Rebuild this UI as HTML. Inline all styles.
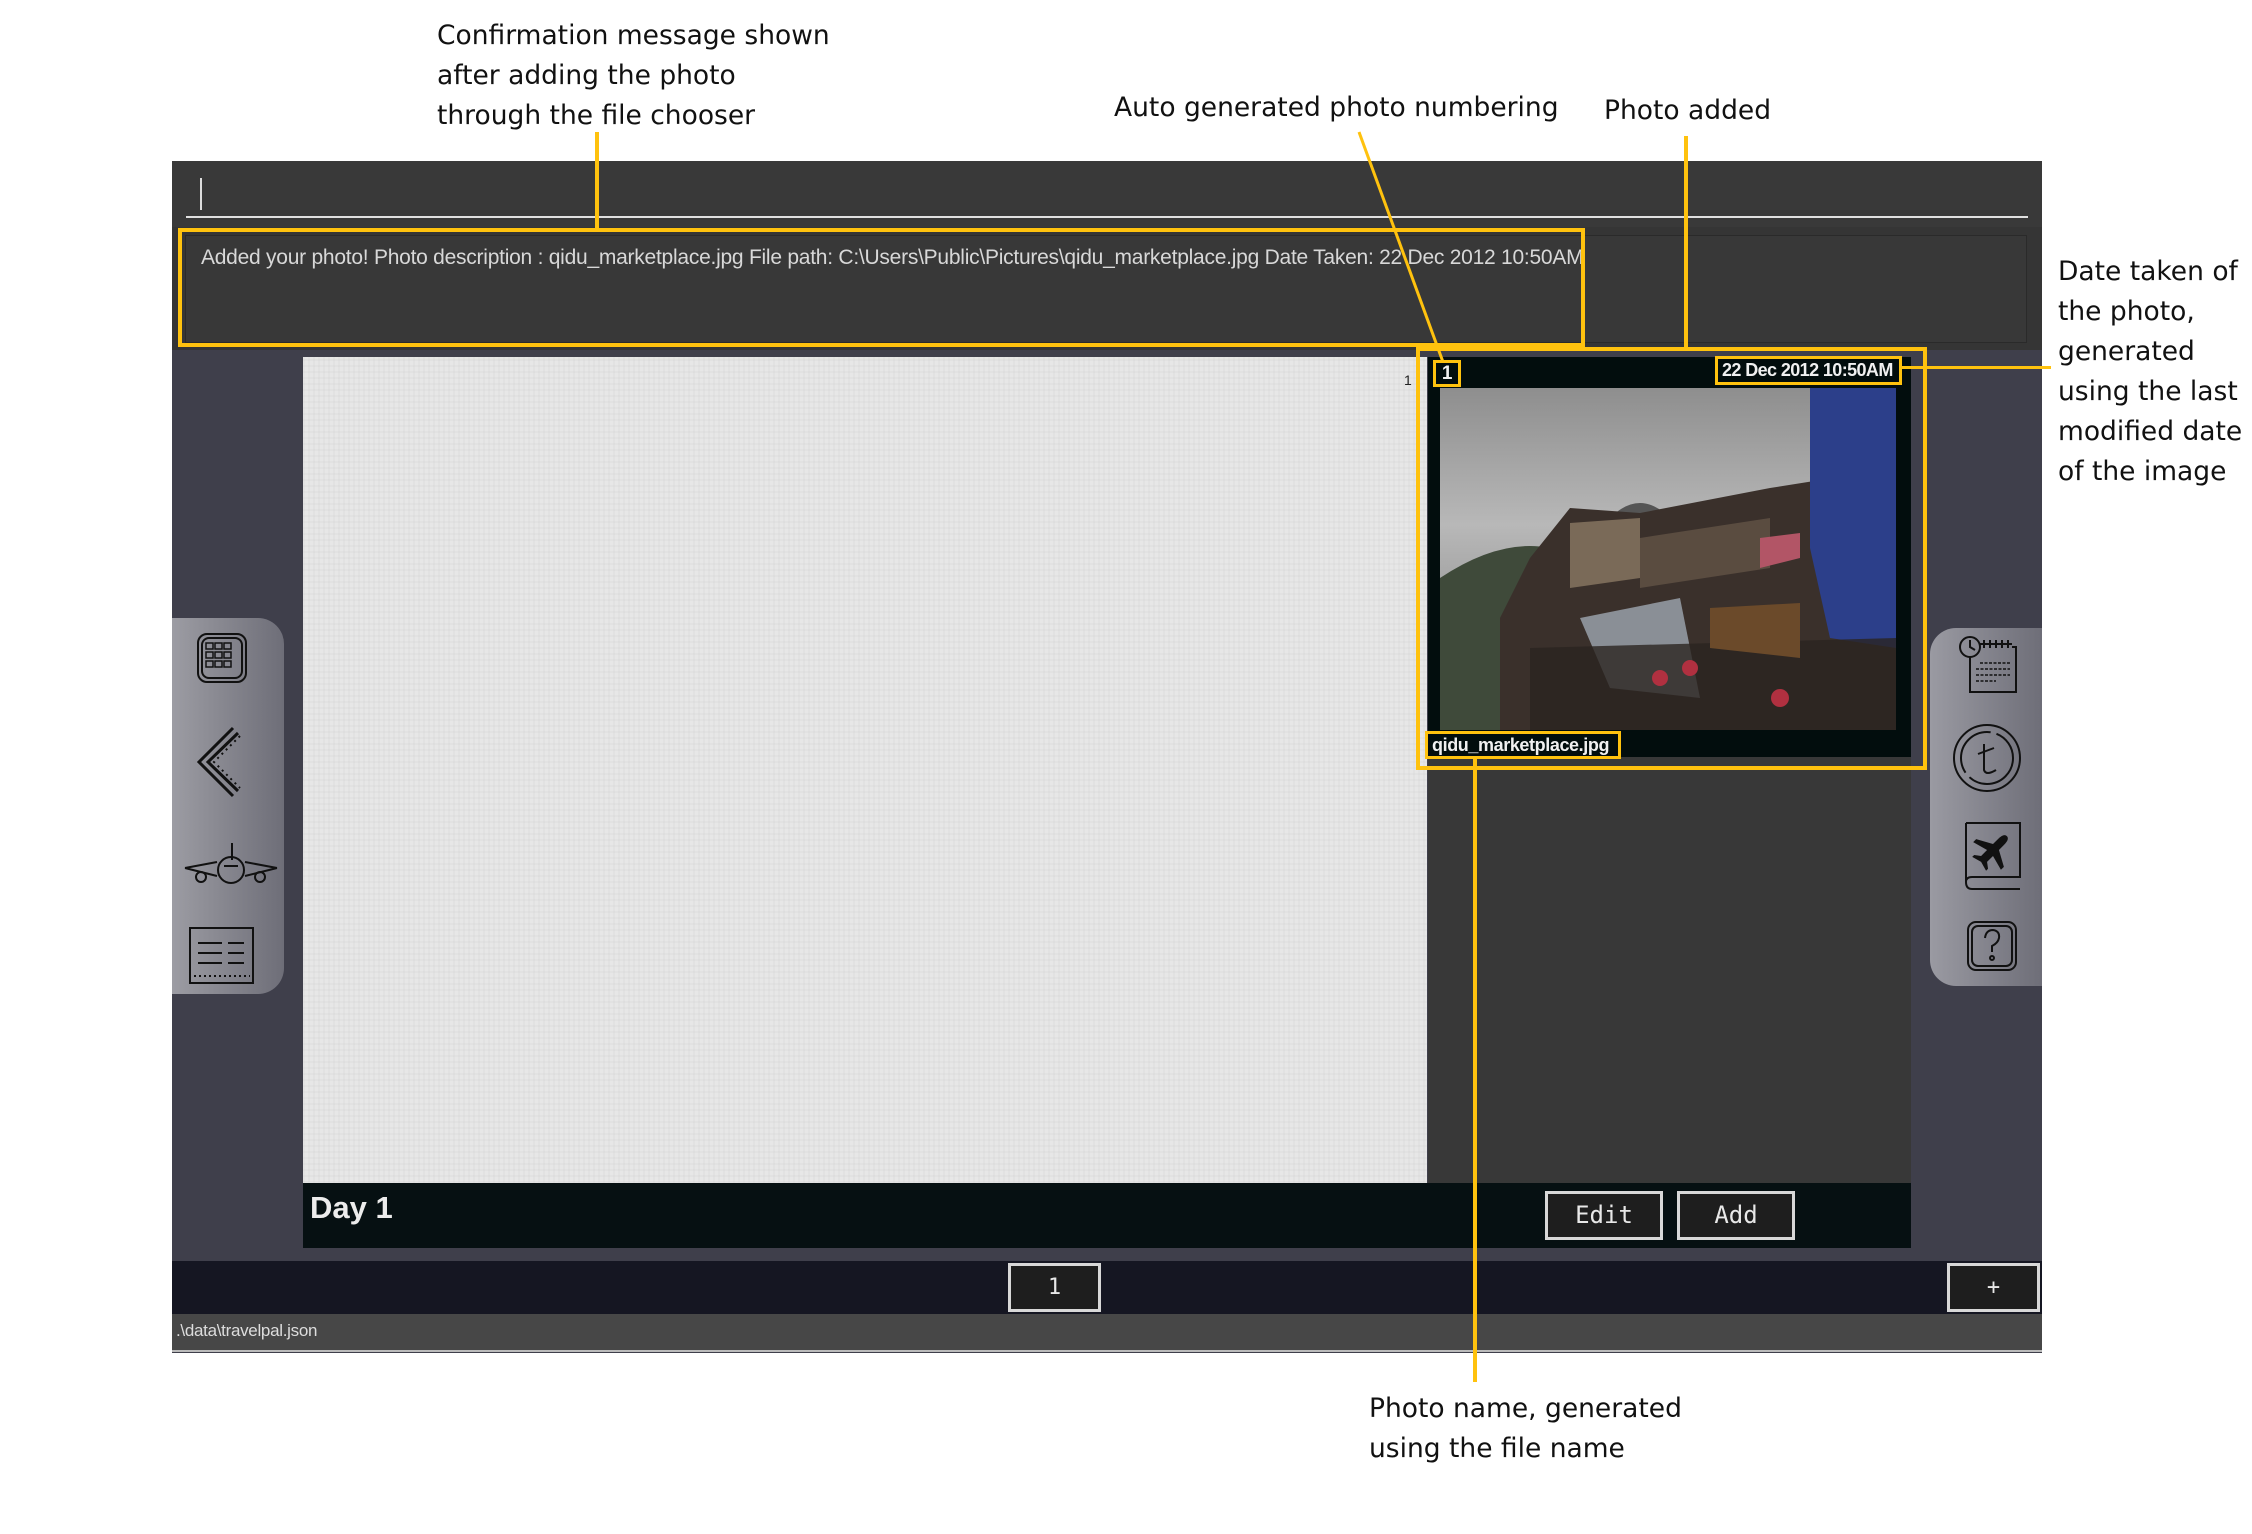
<!DOCTYPE html>
<html><head><meta charset="utf-8"><style>
*{margin:0;padding:0;box-sizing:border-box}
body{width:2252px;height:1534px;background:#fff;position:relative;overflow:hidden;font-family:"Liberation Sans",sans-serif}
.a{position:absolute}
.ann{position:absolute;line-height:40px;color:#111;font-family:"DejaVu Sans","Liberation Sans",sans-serif;font-size:26.5px}
.y{position:absolute;background:#ffc20e}
.yb{position:absolute;border:4px solid #ffc20e}
.btn{position:absolute;background:#1e1e1e;border:3px solid #d8d8d8;color:#e8e8e8;font-family:"DejaVu Sans Mono","Liberation Mono",monospace;font-size:24px;text-align:center}
.lbl{position:absolute;border:3px solid #ffc20e;background:#020d0d;color:#f0f0f0;font-weight:bold;font-size:18px;letter-spacing:-0.3px}
</style></head><body>

<div class="ann" style="left:437px;top:16px">Confirmation message shown<br>after adding the photo<br>through the file chooser</div>
<div class="ann" style="left:1114px;top:88px">Auto generated photo numbering</div>
<div class="ann" style="left:1604px;top:91px">Photo added</div>
<div class="ann" style="left:2058px;top:252px">Date taken of<br>the photo,<br>generated<br>using the last<br>modified date<br>of the image</div>
<div class="ann" style="left:1369px;top:1389px">Photo name, generated<br>using the file name</div>

<!-- app -->
<div class="a" style="left:172px;top:161px;width:1870px;height:1192px;background:#3f3f4b"></div>
<div class="a" style="left:172px;top:161px;width:1870px;height:66px;background:#393939"></div>
<div class="a" style="left:186px;top:216px;width:1842px;height:2px;background:#e0e0e0"></div>
<div class="a" style="left:200px;top:178px;width:2px;height:32px;background:#ddd"></div>
<div class="a" style="left:172px;top:227px;width:1870px;height:123px;background:#353535"></div>
<div class="a" style="left:185px;top:235px;width:1842px;height:108px;background:#383838;border:1px solid #2a2a2a"></div>
<div class="a" style="left:201px;top:246px;color:#d8d8d8;font-size:21px;letter-spacing:-0.25px;white-space:nowrap">Added your photo! Photo description : qidu_marketplace.jpg File path: C:\Users\Public\Pictures\qidu_marketplace.jpg Date Taken: 22 Dec 2012 10:50AM</div>

<!-- left sidebar -->
<div class="a" style="left:172px;top:618px;width:112px;height:376px;background:linear-gradient(90deg,#9c9ca3,#6e6e78);border-radius:0 26px 26px 0"></div>
<svg class="a" style="left:172px;top:610px" width="130" height="390" viewBox="0 0 130 390" fill="none" stroke="#111" stroke-width="2">
<rect x="26" y="24" width="48" height="48" rx="9"/><rect x="30" y="28" width="40" height="40" rx="7"/>
<g stroke-width="1.5"><rect x="34" y="33" width="7" height="6"/><rect x="43" y="33" width="7" height="6"/><rect x="52" y="33" width="7" height="6"/><rect x="34" y="42" width="7" height="6"/><rect x="43" y="42" width="7" height="6"/><rect x="52" y="42" width="7" height="6"/><rect x="34" y="51" width="7" height="6"/><rect x="43" y="51" width="7" height="6"/><rect x="52" y="51" width="7" height="6"/></g>
<path d="M61 118 L27 152 L61 186 M66 123 L36 152 L66 181" stroke-width="3"/>
<path d="M68 126 L42 152 L68 178" stroke-dasharray="2 4"/>
<path d="M60 233 V250 M13 258 L45 252 M73 252 L105 258 M13 258 L45 266 M73 266 L105 258"/>
<circle cx="59" cy="260" r="13"/><circle cx="29" cy="267" r="5"/><circle cx="88" cy="267" r="5"/>
<path d="M52 256 H66"/>
<rect x="18" y="318" width="63" height="55"/><path d="M26 333 H50 M56 333 H72 M26 343 H50 M56 343 H72 M26 353 H50 M56 353 H72"/><path d="M22 366 H78" stroke-dasharray="2 3"/>
</svg>

<!-- paper -->
<div class="a" style="left:303px;top:357px;width:1124px;height:826px;background:#e7e7e7;background-image:repeating-linear-gradient(90deg,rgba(0,0,0,.025) 0 2px,transparent 2px 5px),repeating-linear-gradient(0deg,rgba(0,0,0,.02) 0 2px,transparent 2px 6px)"></div>
<div class="a" style="left:1404px;top:372px;font-size:14px;color:#222">1</div>

<!-- right panel -->
<div class="a" style="left:1428px;top:357px;width:483px;height:826px;background:#383838"></div>
<div class="a" style="left:1428px;top:357px;width:483px;height:400px;background:#020d0d"></div>
<svg class="a" style="left:1440px;top:388px" width="456" height="342" viewBox="0 0 456 342">
<defs><linearGradient id="sky" x1="0" y1="0" x2="0" y2="1"><stop offset="0" stop-color="#8e8e8e"/><stop offset=".4" stop-color="#b8b8b8"/><stop offset="1" stop-color="#777"/></linearGradient></defs>
<rect width="456" height="342" fill="url(#sky)"/>
<path d="M0 190 Q60 150 110 160 L110 342 L0 342Z" fill="#3f4a3a"/>
<path d="M170 130 Q200 100 230 130 L240 140 L160 150Z" fill="#555"/>
<path d="M90 170 L130 120 L200 125 L330 100 L456 80 L456 342 L60 342 L60 230Z" fill="#3a302b"/>
<path d="M130 135 L200 130 L200 190 L130 200Z" fill="#7a6a58"/>
<path d="M200 150 L330 130 L330 180 L200 200Z" fill="#5a4c40"/>
<path d="M370 0 L456 0 L456 260 L390 250 L370 160Z" fill="#2c3f8a"/>
<path d="M320 150 L360 145 L360 170 L320 180Z" fill="#b25566"/>
<path d="M140 230 L240 210 L260 310 L170 300Z" fill="#8a8f96"/>
<path d="M90 260 L456 250 L456 342 L90 342Z" fill="#2a2420" opacity=".8"/>
<circle cx="220" cy="290" r="8" fill="#b03040"/><circle cx="250" cy="280" r="8" fill="#b03040"/><circle cx="340" cy="310" r="9" fill="#b03040"/>
<path d="M270 220 L360 215 L360 270 L270 260Z" fill="#6b4a2a"/>
</svg>
<div class="yb" style="left:1416px;top:347px;width:511px;height:423px"></div>
<div class="lbl" style="left:1433px;top:360px;width:28px;height:27px;text-align:center;line-height:22px;font-size:19px">1</div>
<div class="lbl" style="left:1715px;top:356px;width:187px;height:29px;line-height:23px;padding-left:4px;letter-spacing:-0.6px">22 Dec 2012 10:50AM</div>
<div class="lbl" style="left:1425px;top:731px;width:196px;height:28px;line-height:22px;padding-left:4px;letter-spacing:-0.4px">qidu_marketplace.jpg</div>

<!-- day bar -->
<div class="a" style="left:303px;top:1183px;width:1608px;height:65px;background:#061012"></div>
<div class="a" style="left:310px;top:1190px;color:#ececec;font-size:31px;font-weight:bold">Day 1</div>
<div class="btn" style="left:1545px;top:1191px;width:118px;height:49px;line-height:43px">Edit</div>
<div class="btn" style="left:1677px;top:1191px;width:118px;height:49px;line-height:43px">Add</div>

<!-- right sidebar -->
<div class="a" style="left:1930px;top:628px;width:112px;height:358px;background:linear-gradient(90deg,#9a9aa2,#6e6e78);border-radius:26px 0 0 26px"></div>
<svg class="a" style="left:1920px;top:620px" width="130" height="380" viewBox="0 0 130 380" fill="none" stroke="#111" stroke-width="2">
<circle cx="50" cy="27" r="10"/><path d="M50 20 V27 L55 30 M60 24 H92 M64 20 V28 M70 20 V28 M76 20 V28 M82 20 V28 M88 20 V28"/>
<path d="M50 37 V72 H96 V27 H92"/><g stroke-width="1.5"><path d="M60 43 H90 M56 49 H90 M56 55 H90 M56 61 H76" stroke-dasharray="3 1.5"/></g>
<circle cx="67" cy="138" r="33"/><circle cx="67" cy="138" r="26" stroke-dasharray="60 6"/>
<path d="M64 124 V150 Q66 156 76 150 M58 134 L74 128"/>
<path d="M46 203 H100 V257 H52 Q46 257 46 262 Q46 269 52 269 H100 M46 203 V262"/>
<path transform="translate(73 230) rotate(45) scale(1.4)" d="M0 -14 Q3 -14 3 -8 V-3 L14 3 V6 L3 3 V9 L7 12 V14 L0 12 L-7 14 V12 L-3 9 V3 L-14 6 V3 L-3 -3 V-8 Q-3 -14 0 -14Z" fill="#111" stroke="none"/>
<rect x="48" y="302" width="48" height="48" rx="8"/><rect x="52" y="306" width="40" height="40" rx="6"/>
<path d="M65 318 Q66 310 73 310 Q80 311 79 318 Q78 323 72 326 V332"/><circle cx="72" cy="338" r="2"/>
</svg>

<!-- page bar -->
<div class="a" style="left:172px;top:1261px;width:1870px;height:53px;background:#151622"></div>
<div class="btn" style="left:1008px;top:1263px;width:93px;height:49px;line-height:43px;font-size:22px">1</div>
<div class="btn" style="left:1947px;top:1263px;width:93px;height:49px;line-height:43px;font-size:22px">+</div>
<div class="a" style="left:172px;top:1314px;width:1870px;height:38px;background:#474747;border-bottom:2px solid #bbb"></div>
<div class="a" style="left:176px;top:1321px;color:#ddd;font-size:17px;letter-spacing:-0.3px">.\data\travelpal.json</div>

<!-- yellow callouts -->
<div class="yb" style="left:178px;top:228px;width:1407px;height:119px"></div>
<div class="y" style="left:595px;top:132px;width:4px;height:98px"></div>
<div class="y" style="left:1684px;top:136px;width:4px;height:214px"></div>
<div class="y" style="left:1901px;top:366px;width:150px;height:3px"></div>
<div class="y" style="left:1473px;top:759px;width:4px;height:623px"></div>
<svg class="a" style="left:1350px;top:125px" width="120" height="240"><line x1="9" y1="7" x2="93" y2="237" stroke="#ffc20e" stroke-width="3"/></svg>
</body></html>
